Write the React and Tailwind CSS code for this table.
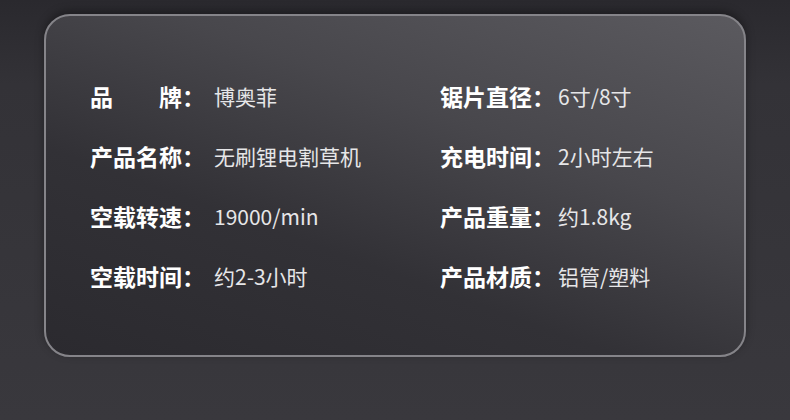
const specs = [
  [["品", "牌"], "博奥菲", ["锯片直径"], "6寸/8寸"],
  [["产品名称"], "无刷锂电割草机", ["充电时间"], "2小时左右"],
  [["空载转速"], "19000/min", ["产品重量"], "约1.8kg"],
  [["空载时间"], "约2-3小时", ["产品材质"], "铝管/塑料"],
];

function Label({ parts }) {
  return (
    <div className="flex items-center text-[23px] font-bold text-white leading-none">
      <span className="flex w-[92px] justify-between">
        {parts.map((p, i) => (
          <span key={i}>{p}</span>
        ))}
      </span>
      <span>：</span>
    </div>
  );
}

export default function App() {
  return (
    <div
      className="w-[790px] h-[420px] overflow-hidden bg-[linear-gradient(180deg,#2a292e_0%,#333237_20%,#39383d_100%)] pt-[14px] pl-[44px]"
      style={{ fontFamily: '"Noto Sans CJK SC", "Noto Sans", sans-serif' }}
    >
      <div className="w-[702px] h-[343px] rounded-[26px] border-2 border-[#858489] bg-[linear-gradient(20deg,#2b2a2f_0%,#323136_35%,#48474c_65%,#5b5a5f_100%)] shadow-[0_-3px_8px_rgba(0,0,0,0.35)] pt-[50px] pl-[44px]">
        {specs.map(([l1, v1, l2, v2], i) => (
          <div key={i} className="flex h-[60px] items-center">
            <div className="flex w-[350px] items-center">
              <Label parts={l1} />
              <span className="ml-[9px] text-[21px] text-[#e6e6e8] leading-none">
                {v1}
              </span>
            </div>
            <div className="flex items-center">
              <Label parts={l2} />
              <span className="ml-[3px] text-[21px] text-[#e6e6e8] leading-none">
                {v2}
              </span>
            </div>
          </div>
        ))}
      </div>
    </div>
  );
}
